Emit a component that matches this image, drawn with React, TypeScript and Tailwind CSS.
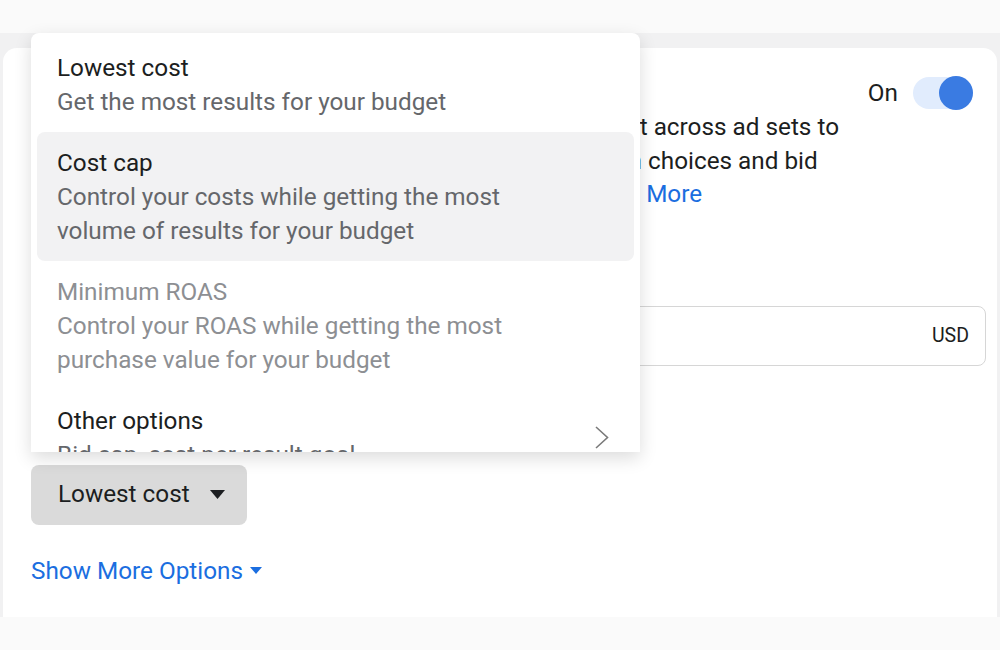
const options = [
    { title: "Lowest cost", desc: ["Get the most results for your budget"], active: false, disabled: false },
    { title: "Cost cap", desc: ["Control your costs while getting the most", "volume of results for your budget"], active: true, disabled: false },
    { title: "Minimum ROAS", desc: ["Control your ROAS while getting the most", "purchase value for your budget"], active: false, disabled: true },
];

function Toggle() {
    return (
        <div className="relative w-[60px] h-[34px] flex items-center">
            <div className="w-[60px] h-[32px] rounded-full bg-[#e1ecfd]" />
            <div className="absolute right-0 top-0 w-[34px] h-[34px] rounded-full bg-[#3a7be2]" />
        </div>
    );
}

function BidMenu() {
    return (
        <div className="absolute left-[31px] top-[33px] w-[609px] h-[419px] overflow-hidden rounded-t-lg bg-white shadow-[0_6px_18px_rgba(0,0,0,0.14)] pt-[4px]">
            {options.map((o) => (
                <div
                    key={o.title}
                    className={`mx-[6px] px-[20px] pt-[14px] pb-[13px] rounded-lg ${o.active ? "bg-[#f2f2f3]" : ""}`}
                >
                    <div className={`text-[24.3px] leading-[34px] ${o.disabled ? "text-[#8d8f93]" : "text-[#1c1e21]"}`}>{o.title}</div>
                    {o.desc.map((d) => (
                        <div key={d} className={`text-[24.3px] leading-[34px] ${o.disabled ? "text-[#8d8f93]" : "text-[#65676b]"}`}>{d}</div>
                    ))}
                </div>
            ))}
            {/* last row is cut off by the menu's edge */}
            <div className="mx-[6px] px-[20px] pt-[14px] flex items-start justify-between">
                <div>
                    <div className="text-[24.3px] leading-[34px] text-[#1c1e21]">Other options</div>
                    <div className="text-[24.3px] leading-[34px] text-[#65676b]">Bid cap, cost per result goal</div>
                </div>
                <svg width="14" height="23" viewBox="0 0 14 23" className="mt-[22px] mr-[5px]" fill="none">
                    <path d="M1 1l11.5 10.5L1 22" stroke="#7a7a7a" strokeWidth="1.6" />
                </svg>
            </div>
        </div>
    );
}

export default function App() {
    return (
        <div className="relative w-[1000px] h-[650px] overflow-hidden bg-[#fafafa] font-['Roboto',sans-serif]">
            <div className="h-[33px]" />
            <div className="h-[584px] bg-[#f1f1f2] pt-[15px] px-[3px]">
                <div className="h-full bg-white rounded-t-[14px] pl-[28px] pr-[11px] pt-[28px]">
                    <div className="flex items-center justify-between h-[34px]">
                        <div className="text-[24.3px] font-medium text-[#1c1e21]">Campaign Budget Optimization</div>
                        <div className="flex items-center gap-[15px] mr-[13px]">
                            <span className="text-[24.3px] text-[#1c1e21]">On</span>
                            <Toggle />
                        </div>
                    </div>
                    <p className="text-[24.3px] leading-[33.5px] text-[#1c1e21]">
                        Campaign budget optimization will distribute your budget across ad sets to<br />
                        get more results depending on your delivery optimization choices and bid<br />
                        strategy. You can control spending on each ad set. <span className="text-[#1b6ee0]">Learn More</span>
                    </p>
                    <div className="mt-[42px] text-[24.3px] leading-[34px] font-medium text-[#1c1e21]">Campaign Budget</div>
                    <div className="mt-[19px] h-[60px] rounded-lg border border-[#d6d6d6] flex items-center justify-between pl-[18px] pr-[16px]">
                        <span className="text-[24.3px] text-[#1c1e21]">Daily Budget</span>
                        <span className="text-[19.5px] text-[#1c1e21]">USD</span>
                    </div>
                    <div className="mt-[46px] text-[24.3px] leading-[34px] font-medium text-[#1c1e21]">Campaign Bid Strategy</div>
                    <button className="mt-[19px] h-[60px] w-[216px] rounded-lg bg-[#dadada] flex items-center pl-[27px] gap-[20px] text-[24.3px] text-[#1c1e21]">
                        Lowest cost
                        <svg width="15" height="9" viewBox="0 0 15 9"><path d="M0 0h15L7.5 9z" fill="#1c1e21" /></svg>
                    </button>
                    <div className="mt-[29px] flex items-center gap-[7px] text-[24.3px] leading-[34px] text-[#1b6ee0]">
                        Show More Options
                        <svg width="12" height="7" viewBox="0 0 12 7"><path d="M0 0h12L6 7z" fill="#1b6ee0" /></svg>
                    </div>
                </div>
            </div>
            <BidMenu />
        </div>
    );
}
